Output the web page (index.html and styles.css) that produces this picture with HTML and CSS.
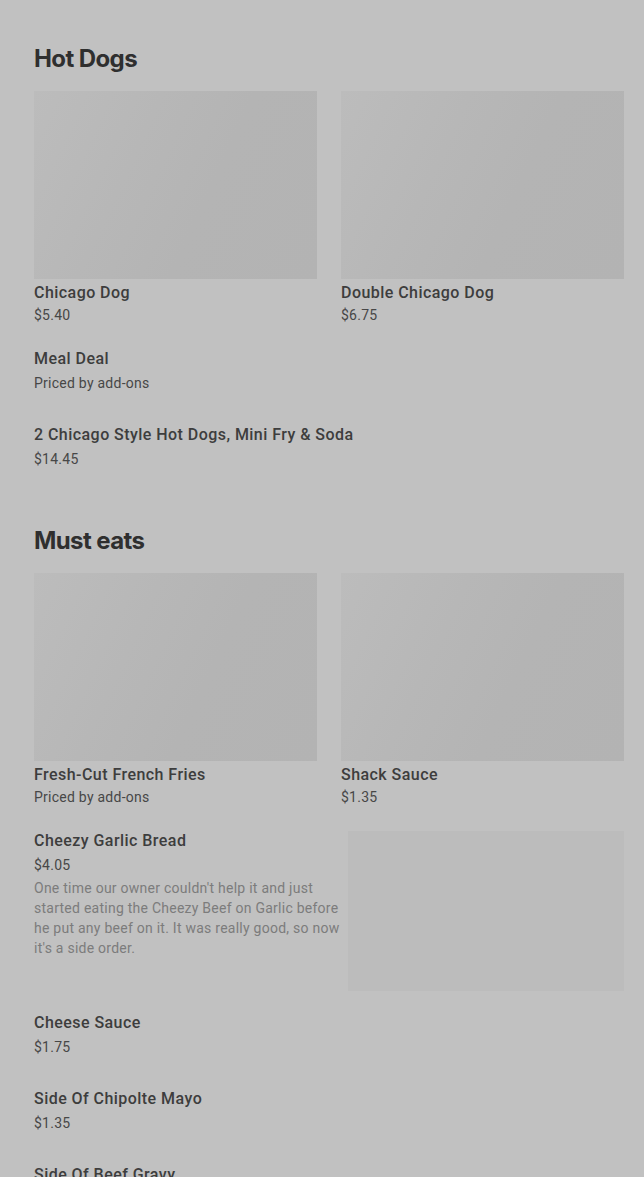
FILE: index.html
```html
<!DOCTYPE html>
<html lang="en">
<head>
<meta charset="utf-8">
<title>Menu</title>
<link rel="stylesheet" href="styles.css">
</head>
<body>
<main class="menu">
  <section class="section">
    <h2 class="section-title">Hot Dogs</h2>
    <div class="card-grid">
      <div class="card">
        <div class="card-img"></div>
        <div class="item-title">Chicago Dog</div>
        <div class="item-price">$5.40</div>
      </div>
      <div class="card">
        <div class="card-img"></div>
        <div class="item-title">Double Chicago Dog</div>
        <div class="item-price">$6.75</div>
      </div>
    </div>
    <div class="list">
      <div class="item">
        <div class="item-title">Meal Deal</div>
        <div class="item-price list-price">Priced by add-ons</div>
      </div>
      <div class="item">
        <div class="item-title">2 Chicago Style Hot Dogs, Mini Fry &amp; Soda</div>
        <div class="item-price list-price">$14.45</div>
      </div>
    </div>
  </section>

  <section class="section">
    <h2 class="section-title">Must eats</h2>
    <div class="card-grid">
      <div class="card">
        <div class="card-img"></div>
        <div class="item-title">Fresh-Cut French Fries</div>
        <div class="item-price">Priced by add-ons</div>
      </div>
      <div class="card">
        <div class="card-img"></div>
        <div class="item-title">Shack Sauce</div>
        <div class="item-price">$1.35</div>
      </div>
    </div>
    <div class="list">
      <div class="item item-with-img">
        <div class="item-text">
          <div class="item-title">Cheezy Garlic Bread</div>
          <div class="item-price list-price">$4.05</div>
          <p class="item-desc">One time our owner couldn't help it and just started eating the Cheezy Beef on Garlic before he put any beef on it. It was really good, so now it's a side order.</p>
        </div>
        <div class="item-img"></div>
      </div>
      <div class="item">
        <div class="item-title">Cheese Sauce</div>
        <div class="item-price list-price">$1.75</div>
      </div>
      <div class="item">
        <div class="item-title">Side Of Chipolte Mayo</div>
        <div class="item-price list-price">$1.35</div>
      </div>
      <div class="item">
        <div class="item-title">Side Of Beef Gravy</div>
        <div class="item-price list-price">$1.35</div>
      </div>
    </div>
  </section>
</main>
</body>
</html>
```

FILE: styles.css
```css
html, body {
  margin: 0;
  padding: 0;
  background: #c1c1c1;
}

body {
  font-family: Roboto, "Liberation Sans", sans-serif;
  color: #3a3a3a;
  overflow: hidden;
}

.menu {
  padding: 43px 20px 0 34px;
}

.section + .section {
  margin-top: 26px;
}

.section-title {
  margin: 0 0 16px;
  font-family: Inter, "Liberation Sans", sans-serif;
  font-size: 24px;
  line-height: 32px;
  font-weight: 700;
  letter-spacing: -0.6px;
  color: #2f2f2f;
}

.card-grid {
  display: grid;
  grid-template-columns: 283px 283px;
  column-gap: 24px;
}

.card-img {
  height: 188px;
  background: linear-gradient(115deg, #bcbcbc 0%, #b7b7b7 35%, #b4b4b4 60%, #b3b3b3 100%);
}

.item-title {
  font-size: 16px;
  line-height: 24px;
  font-weight: 500;
  letter-spacing: 0.45px;
  color: #3d3d3d;
}

.card .item-title {
  margin-top: 2px;
}

.item-price {
  font-size: 14px;
  line-height: 20px;
  letter-spacing: 0.25px;
  color: #474747;
}

.list {
  margin-top: 22px;
}

.item {
  padding-bottom: 30px;
}

.list-price {
  margin-top: 2px;
}

.item-with-img {
  display: flex;
  gap: 8px;
  padding-bottom: 20px;
}

.item-text {
  flex: 1;
  min-width: 0;
}

.item-desc {
  margin: 3px 0 0;
  font-size: 14px;
  line-height: 20px;
  letter-spacing: 0.25px;
  color: #7c7c7c;
}

.item-img {
  width: 276px;
  height: 160px;
  margin-top: 2px;
  flex-shrink: 0;
  background: #bcbcbc;
}
```
